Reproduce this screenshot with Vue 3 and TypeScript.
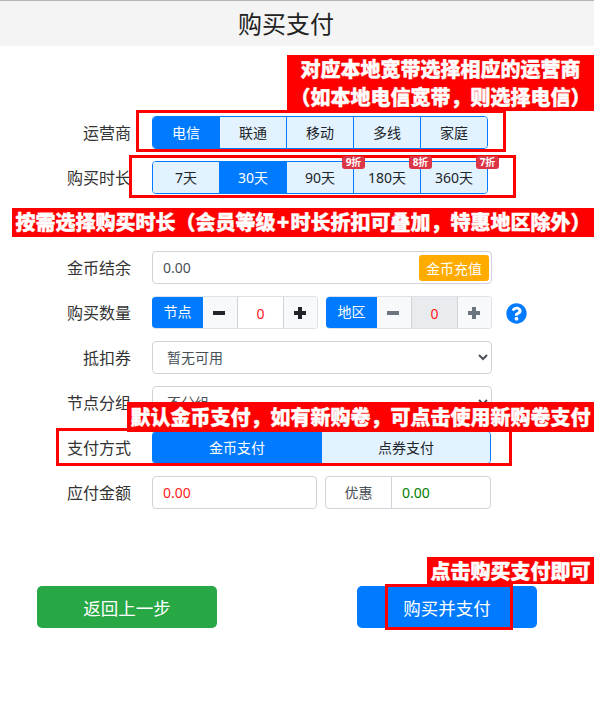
<script setup lang="ts">
const carriers = ['电信', '联通', '移动', '多线', '家庭']
const durations = [
  { label: '7天', badge: '' },
  { label: '30天', badge: '' },
  { label: '90天', badge: '9折' },
  { label: '180天', badge: '8折' },
  { label: '360天', badge: '7折' },
]
const questionPath = 'M504 256c0 136.997-111.043 248-248 248S8 392.997 8 256C8 119.083 119.043 8 256 8s248 111.083 248 248zM262.655 90c-54.497 0-89.255 22.957-116.549 63.758-3.536 5.286-2.353 12.415 2.715 16.258l34.699 26.31c5.205 3.947 12.621 3.008 16.665-2.122 17.864-22.658 30.113-35.797 57.303-35.797 20.429 0 45.698 13.148 45.698 32.958 0 14.976-12.363 22.667-32.534 33.976C247.128 238.528 216 254.941 216 296v4c0 6.627 5.373 12 12 12h56c6.627 0 12-5.373 12-12v-1.333c0-28.462 83.186-29.647 83.186-106.667 0-58.002-60.165-102-116.531-102zM256 338c-25.365 0-46 20.635-46 46 0 25.364 20.635 46 46 46s46-20.636 46-46c0-25.365-20.635-46-46-46z'
</script>

<template>
  <div class="page">
    <header class="title">购买支付</header>

    <main class="form">
      <div class="row">
        <label class="label">运营商</label>
        <div class="segments">
          <button v-for="(c, i) in carriers" :key="c" class="seg" :class="{ on: i === 0 }">{{ c }}</button>
        </div>
      </div>

      <div class="row">
        <label class="label">购买时长</label>
        <div class="segments">
          <button v-for="(d, i) in durations" :key="d.label" class="seg" :class="{ on: i === 1 }">
            {{ d.label }}
            <span v-if="d.badge" class="badge">{{ d.badge }}</span>
          </button>
        </div>
      </div>

      <div class="row blank"></div>

      <div class="row">
        <label class="label">金币结余</label>
        <div class="box coin">
          <span>0.00</span>
          <button class="recharge">金币充值</button>
        </div>
      </div>

      <div class="row">
        <label class="label">购买数量</label>
        <div class="qty-row">
          <div class="qty">
            <span class="qty-tag">节点</span>
            <span class="step minus dark"><i></i></span>
            <span class="qty-val">0</span>
            <span class="step plus dark"><i></i><b></b></span>
          </div>
          <div class="qty second">
            <span class="qty-tag">地区</span>
            <span class="step minus"><i></i></span>
            <span class="qty-val off">0</span>
            <span class="step plus"><i></i><b></b></span>
          </div>
          <svg class="help" viewBox="0 0 512 512"><path :d="questionPath" /></svg>
        </div>
      </div>

      <div class="row">
        <label class="label">抵扣券</label>
        <select class="sel"><option>暂无可用</option></select>
      </div>

      <div class="row">
        <label class="label">节点分组</label>
        <select class="sel"><option>不分组</option></select>
      </div>

      <div class="row">
        <label class="label">支付方式</label>
        <div class="segments pay">
          <button class="seg on">金币支付</button>
          <button class="seg">点券支付</button>
        </div>
      </div>

      <div class="row">
        <label class="label">应付金额</label>
        <div class="totals">
          <div class="box due">0.00</div>
          <div class="box discount">
            <span class="disc-tag">优惠</span>
            <span class="disc-val">0.00</span>
          </div>
        </div>
      </div>

      <div class="actions">
        <button class="act back">返回上一步</button>
        <button class="act buy">购买并支付</button>
      </div>
    </main>

    <div class="note n1">对应本地宽带选择相应的运营商<br />（如本地电信宽带，则选择电信）</div>
    <div class="frame f1"></div>
    <div class="frame f2"></div>
    <div class="note n2">按需选择购买时长（会员等级<span class="plus-sign">+</span>时长折扣可叠加，特惠地区除外）</div>
    <div class="frame f3"></div>
    <div class="note n3">默认金币支付，如有新购卷，可点击使用新购卷支付</div>
    <div class="frame f4"></div>
    <div class="note n4">点击购买支付即可</div>
  </div>
</template>

<style>
html, body { margin: 0; background: #fff; }
</style>

<style scoped>
* { box-sizing: border-box; }
.page {
  position: relative;
  width: 594px;
  height: 704px;
  overflow: hidden;
  font-family: "Noto Sans", "Noto Sans CJK SC", sans-serif;
  font-size: 14px;
  color: #212529;
  background: #fff;
}
.title {
  height: 46px;
  line-height: 44px;
  padding-right: 22px;
  background: #f4f4f4;
  border-top: 1px solid #b4b4b4;
  text-align: center;
  font-size: 24px;
  color: #222;
  font-family: "Noto Sans CJK SC", sans-serif;
}
.form { padding-top: 70px; }
.row {
  display: flex;
  align-items: center;
  height: 33px;
  margin-bottom: 12px;
}
.label {
  width: 131px;
  margin-right: 21px;
  padding-bottom: 2px;
  text-align: right;
  font-size: 16px;
  color: #333;
  white-space: nowrap;
}
.segments {
  display: flex;
  width: 336px;
  height: 33px;
  border: 1px solid #007bff;
  border-radius: 4px;
}
.seg {
  position: relative;
  flex: 1;
  padding: 0 0 2px;
  border: 0;
  border-left: 1px solid #007bff;
  background: #e3f2ff;
  color: #212529;
  font: inherit;
}
.seg:first-child { border-left: 0; border-radius: 3px 0 0 3px; }
.seg:last-child { border-radius: 0 3px 3px 0; }
.seg.on { background: #007bff; color: #fff; }
.badge {
  position: absolute;
  z-index: 2;
  top: -6px;
  right: -12px;
  width: 23px;
  height: 13px;
  line-height: 13px;
  border-radius: 3px;
  background: #dc3545;
  color: #fff;
  font-size: 10px;
  font-weight: 700;
  text-align: center;
}
.box {
  height: 33px;
  border: 1px solid #ced4da;
  border-radius: 4px;
  background: #fff;
}
.coin {
  display: flex;
  align-items: center;
  justify-content: space-between;
  width: 340px;
  padding: 0 0 0 10px;
  color: #495057;
}
.recharge {
  width: 70px;
  height: 26px;
  margin-right: 2px;
  padding: 0;
  border: 0;
  border-radius: 3px;
  background: #ffab00;
  color: #fff;
  font: inherit;
}
.qty-row { display: flex; align-items: center; }
.qty {
  display: flex;
  width: 166px;
  height: 33px;
  border: 1px solid #dee2e6;
  border-left: 0;
  border-radius: 4px;
  overflow: hidden;
}
.qty.second { margin-left: 8px; }
.qty-tag {
  flex: none;
  width: 51px;
  margin: -1px 0;
  background: #007bff;
  color: #fff;
  line-height: 32px;
  text-align: center;
  border-radius: 4px 0 0 4px;
}
.step {
  position: relative;
  flex: none;
  width: 33px;
  background: #f8f9fa;
}
.step.minus { width: 34px; }
.step i, .step b {
  position: absolute;
  left: 10px;
  top: 13.5px;
  width: 12px;
  height: 4px;
  background: #6c757d;
}
.step b { left: 14px; top: 9.5px; width: 4px; height: 12px; }
.dark i, .dark b { background: #212529; }
.qty-val {
  flex: 1;
  border-left: 1px solid #ced4da;
  border-right: 1px solid #ced4da;
  color: #ff2020;
  text-align: center;
  line-height: 33px;
}
.qty-val.off { background: #e9ecef; }
.help { width: 21px; height: 21px; margin: 2px 0 0 14px; fill: #007bff; }
.sel {
  width: 340px;
  height: 33px;
  padding: 0 10px;
  border: 1px solid #ced4da;
  border-radius: 4px;
  background: #fff;
  color: #495057;
  font: inherit;
}
.pay { width: 339px; }
.totals { display: flex; gap: 8px; }
.due {
  width: 165px;
  padding-left: 10px;
  line-height: 31px;
  color: #ff2020;
}
.discount { display: flex; width: 166px; line-height: 31px; }
.disc-tag {
  width: 66px;
  border-right: 1px solid #ced4da;
  color: #495057;
  text-align: center;
}
.disc-val { padding-left: 10px; color: #008000; }
.actions {
  display: flex;
  justify-content: space-between;
  margin-top: 77px;
  padding: 0 57px 0 37px;
}
.act {
  width: 180px;
  height: 42px;
  padding: 0;
  border: 0;
  border-radius: 5px;
  color: #fff;
  font: inherit;
  font-size: 17.5px;
}
.back { background: #28a745; }
.buy { background: #007bff; }
.note {
  position: absolute;
  right: 0;
  background: #f00;
  color: #fff;
  font-family: "Noto Sans CJK SC", sans-serif;
  font-weight: 900;
  font-size: 20px;
  line-height: 28px;
  white-space: nowrap;
  text-align: center;
  -webkit-text-stroke: 0.4px #fff;
}
.plus-sign { padding: 0 1.5px; }
.n1 { top: 55px; left: 287px; height: 56px; }
.n2 { top: 208px; left: 12px; height: 29px; }
.n3 { top: 402px; left: 127px; height: 30px; line-height: 30px; }
.n4 { top: 557px; left: 427px; height: 27px; line-height: 27px; }
.frame { position: absolute; border: 3px solid #f00; }
.f1 { left: 136px; top: 110px; width: 370px; height: 42px; }
.f2 { left: 129px; top: 155px; width: 387px; height: 43px; }
.f3 { left: 56px; top: 428px; width: 456px; height: 38px; }
.f4 { left: 385px; top: 584px; width: 128px; height: 46px; }
</style>
